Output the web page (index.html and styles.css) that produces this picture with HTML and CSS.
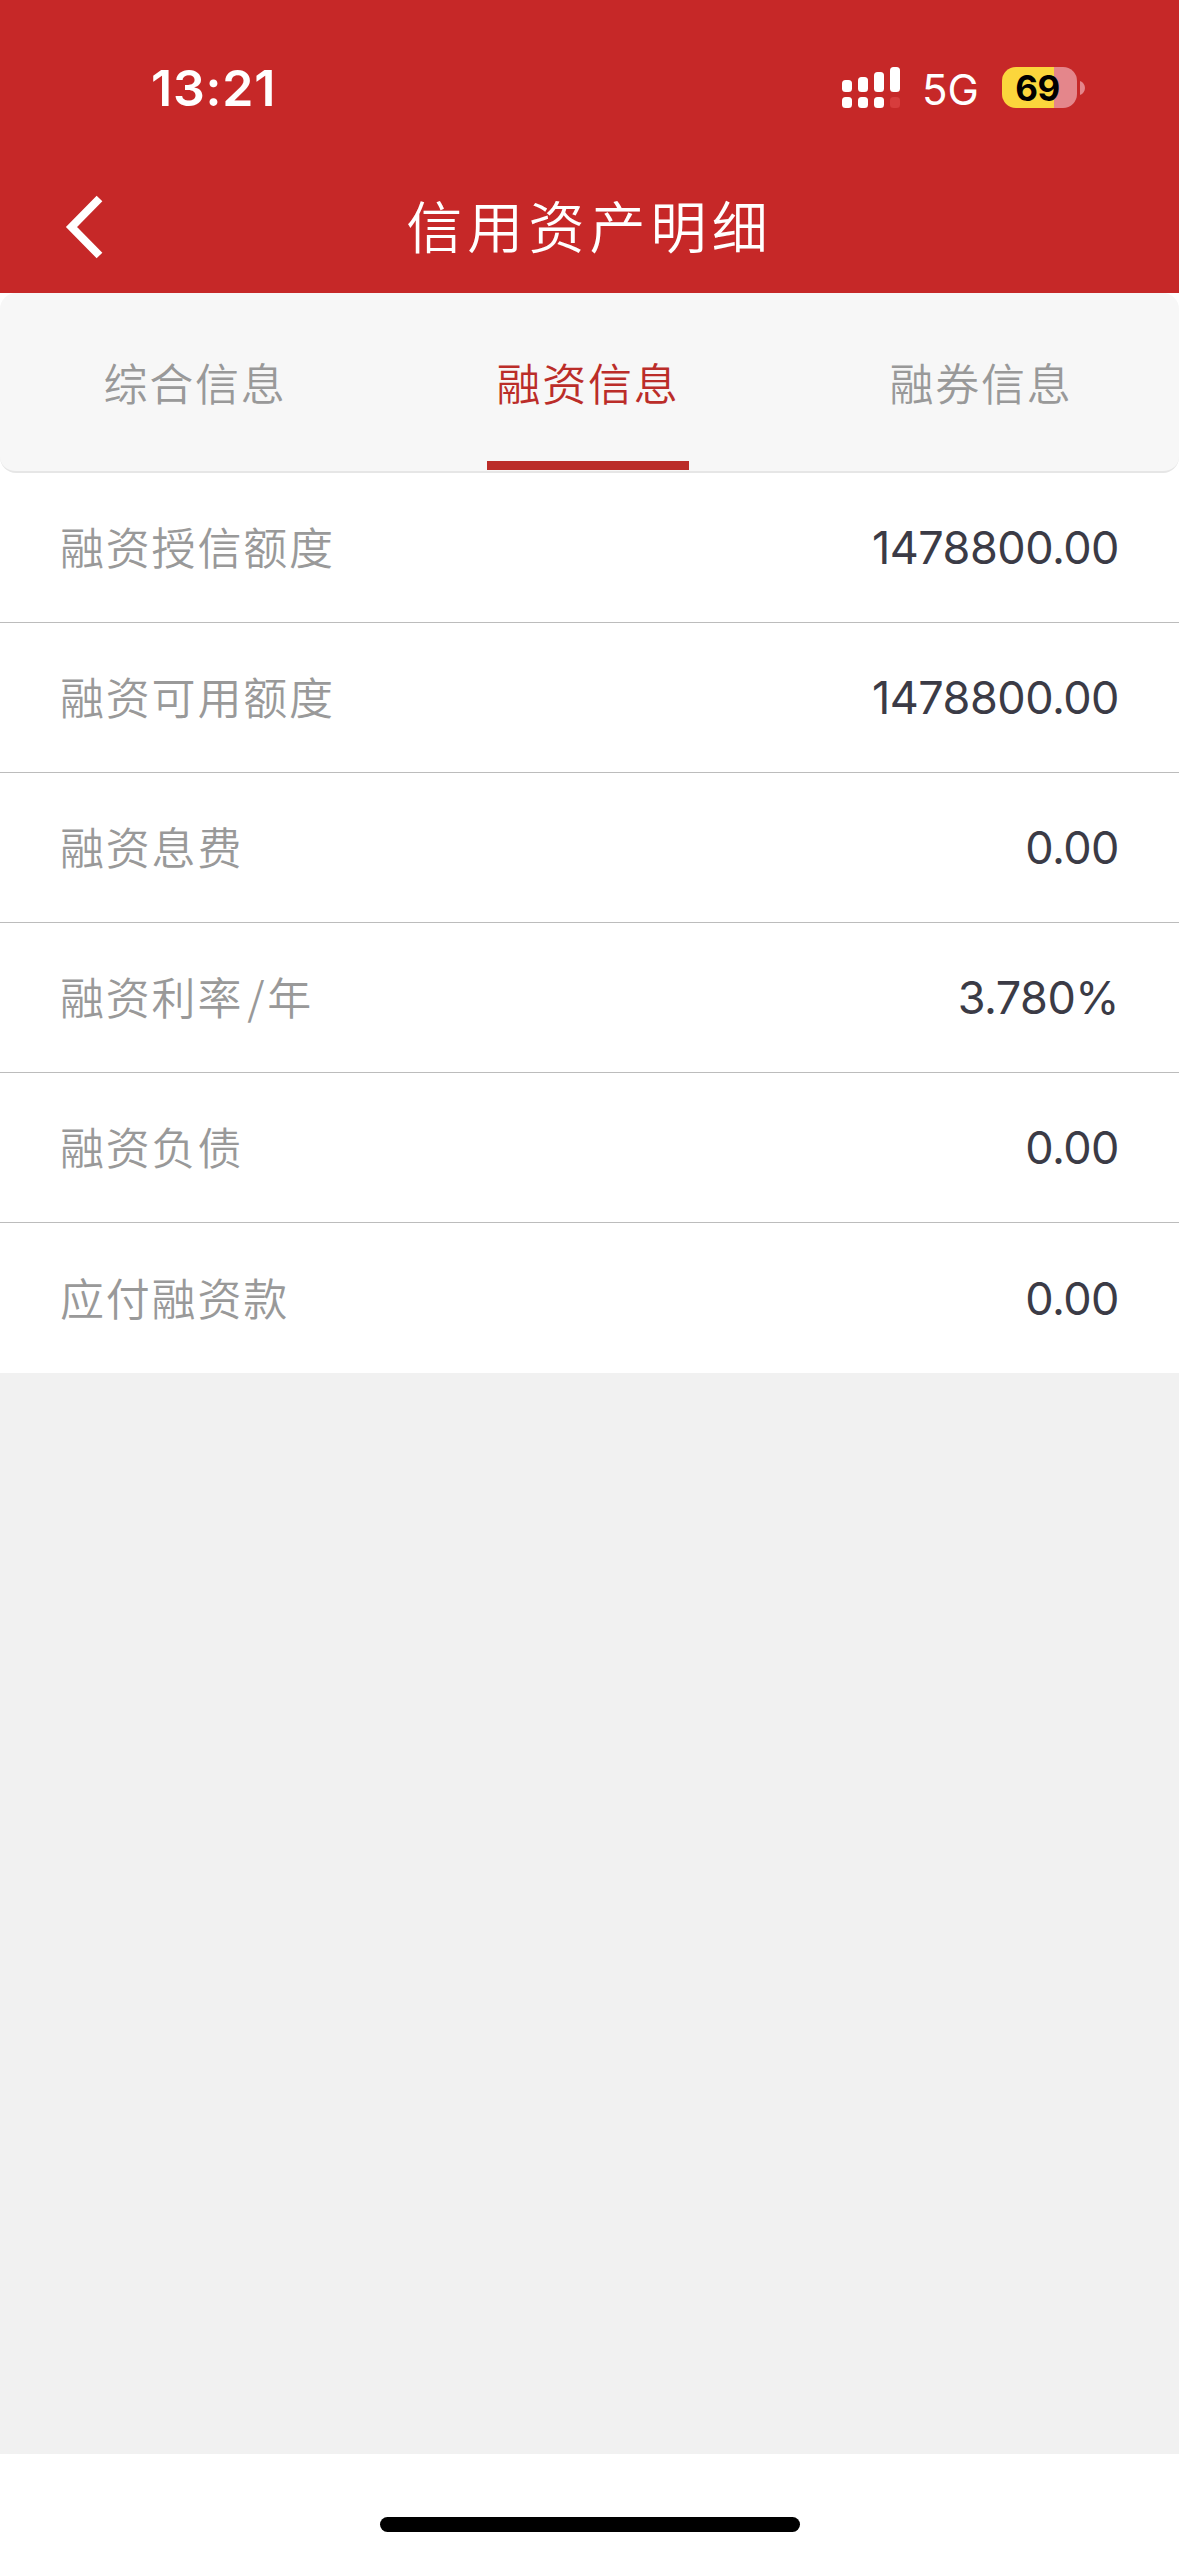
FILE: index.html
```
<!DOCTYPE html>
<html lang="zh-CN">
<head>
    <meta charset="UTF-8">
    <meta name="viewport" content="width=device-width, initial-scale=1.0">
    <title>信用资产明细</title>
    <link rel="stylesheet" href="styles.css">
</head>
<body>
<header class="header">
    <!-- 状态栏 -->
    <div class="status-bar">
        <div class="time">13:21</div>
        <div class="status-icons">
            <svg class="signal" width="58" height="42" viewBox="0 0 58 42" fill="#fff">
                <rect x="0" y="13" width="10" height="12" rx="3.5"/>
                <rect x="16" y="10" width="10" height="15" rx="3.5"/>
                <rect x="32" y="5" width="10" height="20" rx="3.5"/>
                <rect x="48" y="0" width="10" height="25" rx="3.5"/>
                <rect x="0" y="30" width="10" height="11" rx="3.5"/>
                <rect x="16" y="30" width="10" height="11" rx="3.5"/>
                <rect x="32" y="30" width="10" height="11" rx="3.5"/>
                <rect x="48" y="30" width="10" height="11" rx="3.5" fill="#d73c3c"/>
            </svg>
            <span class="network">5G</span>
            <div class="battery">
                <div class="battery-level">69</div>
                <svg width="5" height="14" viewBox="0 0 5 14" fill="#e4868b"><path d="M0 0C3 1 5 4 5 7S3 13 0 14Z"/></svg>
            </div>
        </div>
    </div>
    <!-- 标题栏 -->
    <div class="nav-bar">
        <svg class="back" width="40" height="66" viewBox="0 0 40 66">
            <path d="M34.5 4.5L6.5 33L34.5 61.5" fill="none" stroke="#fff" stroke-width="8"/>
        </svg>
        <h1 class="title">信用资产明细</h1>
    </div>
</header>

<nav class="tabs">
    <div class="tab"><span>综合信息</span></div>
    <div class="tab active"><span>融资信息</span></div>
    <div class="tab"><span>融券信息</span></div>
</nav>

<main class="content">
    <ul class="list">
        <li class="row"><span class="label">融资授信额度</span><span class="value">1478800.00</span></li>
        <li class="row"><span class="label">融资可用额度</span><span class="value">1478800.00</span></li>
        <li class="row"><span class="label">融资息费</span><span class="value">0.00</span></li>
        <li class="row"><span class="label">融资利率<span class="slash">/</span>年</span><span class="value">3.780%</span></li>
        <li class="row"><span class="label">融资负债</span><span class="value">0.00</span></li>
        <li class="row"><span class="label">应付融资款</span><span class="value">0.00</span></li>
    </ul>
</main>

<footer class="footer">
    <div class="home-indicator"></div>
</footer>
</body>
</html>
```
FILE: styles.css
```
:root {
    --red: #c62828;
    --active-color: #bb2d29;
    --label-color: #999;
    --value-color: #3b3b46;
    --line-color: #bcbcbc;
    --font-cjk: "Noto Sans CJK SC", sans-serif;
    --font-num: Inter, "Noto Sans CJK SC", sans-serif;
}
* {
    box-sizing: border-box;
}
body {
    margin: 0;
    height: 100vh;
    display: flex;
    flex-direction: column;
    background: #fff;
    font-family: var(--font-cjk);
    font-weight: 350;
}
/* 顶部红色区域 */
.header {
    height: 293px;
    background: var(--red);
    color: #fff;
}
.status-bar {
    height: 175px;
    padding: 0 94px 0 151px;
    display: flex;
    justify-content: space-between;
    align-items: center;
    font-family: var(--font-num);
}
.time {
    font-size: 50px;
    font-weight: 600;
    letter-spacing: 0.8px;
}
.status-icons {
    display: flex;
    align-items: center;
}
.network {
    margin: 4px 0 0 22px;
    width: 80px;
    font-size: 42px;
    font-weight: 400;
    line-height: 42px;
}
.battery {
    display: flex;
    align-items: center;
    gap: 3px;
}
.battery-level {
    width: 75px;
    height: 41px;
    padding-right: 4px;
    border-radius: 14px;
    background: linear-gradient(to right, #fbd63c 52px, #e4868b 52px);
    color: #000;
    font-size: 35px;
    font-weight: 700;
    line-height: 42px;
    letter-spacing: -0.5px;
    text-align: center;
}
.nav-bar {
    height: 104px;
    padding-left: 65px;
    display: flex;
    align-items: center;
}
.title {
    flex: 1;
    margin: 0 105px 6px 0;
    font-size: 56px;
    font-weight: 350;
    line-height: 84px;
    letter-spacing: 5.1px;
    text-align: center;
}
/* 选项卡 */
.tabs {
    height: 180px;
    display: flex;
    border-bottom: 2px solid #e6e6e6;
    border-radius: 16px;
    background: #f7f7f7;
}
.tab {
    flex: 1;
    display: flex;
    flex-direction: column;
    align-items: center;
    color: var(--label-color);
    font-size: 44px;
    line-height: 66px;
    letter-spacing: 1.8px;
    padding: 56px 3px 0 0;
}
.tab.active {
    color: var(--active-color);
}
.tab.active::after {
    content: "";
    width: 202px;
    height: 9px;
    margin-top: 46px;
    background: var(--active-color);
}
/* 明细列表 */
.content {
    flex: 1;
    background: #f1f1f1;
}
.list {
    margin: 0;
    padding: 0;
    list-style: none;
    background: #fff;
}
.row {
    height: 150px;
    padding: 0 60px;
    display: flex;
    justify-content: space-between;
    align-items: center;
    border-bottom: 1px solid var(--line-color);
}
.row:last-child {
    border-bottom: 0;
}
.label {
    margin-bottom: 3px;
    color: var(--label-color);
    font-size: 44px;
    letter-spacing: 1.8px;
}
.slash {
    margin: 0 1px 0 4px;
}
.value {
    color: var(--value-color);
    font-family: var(--font-num);
    font-size: 45px;
    font-weight: 400;
    letter-spacing: -0.5px;
}
/* 底部横条 */
.footer {
    height: 102px;
    padding-top: 63px;
    background: #fff;
}
.home-indicator {
    width: 420px;
    height: 15px;
    margin: 0 auto;
    border-radius: 8px;
    background: #000;
}
```
